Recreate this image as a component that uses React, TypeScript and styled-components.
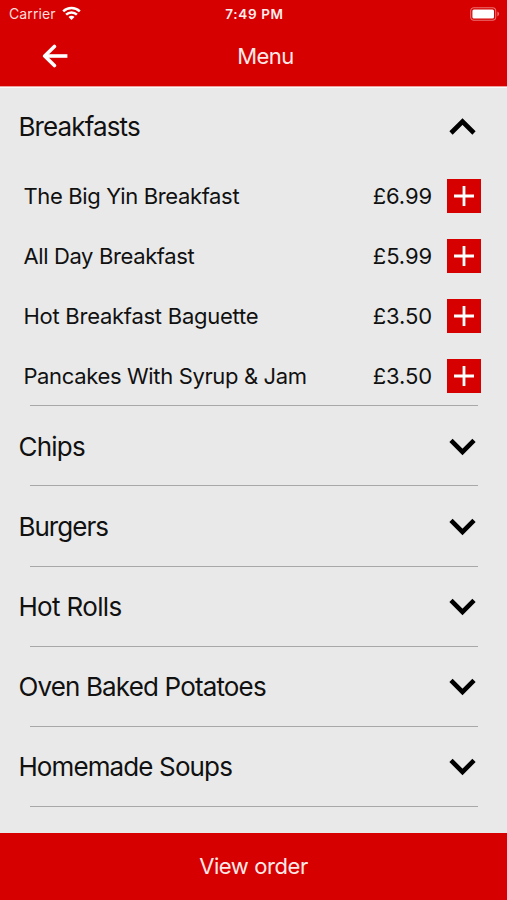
import React, { useState } from "react";
import styled, { createGlobalStyle } from "styled-components";

const RED = "#d60000";

const GlobalStyle = createGlobalStyle`
  * { box-sizing: border-box; }
  html, body { margin: 0; padding: 0; }
  body { background: #e9e9e9; font-family: Inter, "Liberation Sans", sans-serif; color: #111; }
  button { font: inherit; color: inherit; border: 0; padding: 0; margin: 0; background: none; cursor: pointer; }
  svg { display: block; }
`;

const Screen = styled.div`
  width: 507px;
  height: 900px;
  display: flex;
  flex-direction: column;
  overflow: hidden;
  background: #e9e9e9;
`;

const TopBar = styled.header`
  height: 87px;
  flex: none;
  background: ${RED};
  color: #fff;
  border-bottom: 1px solid #ee9c9c;
  box-shadow: 0 1px 0 #fafafa;
`;

const StatusBar = styled.div`
  height: 27px;
  display: grid;
  grid-template-columns: 1fr auto 1fr;
  align-items: center;
  padding: 0 7px 0 9px;
`;

const Carrier = styled.div`
  display: flex;
  align-items: center;
  gap: 6px;
  font-size: 14px;
  letter-spacing: 0.1px;
  color: #ffdede;
`;

const Clock = styled.div`
  font-size: 13.5px;
  font-weight: 600;
  letter-spacing: 0.65px;
  color: #ffeded;
`;

const BatterySlot = styled.div`
  justify-self: end;
`;

const NavBar = styled.nav`
  height: 58px;
  display: grid;
  grid-template-columns: 110px 1fr 110px;
  align-items: center;
`;

const BackButton = styled.button`
  justify-self: start;
  margin-left: 42px;
`;

const Title = styled.h1`
  margin: 0;
  padding-left: 24px;
  text-align: center;
  font-size: 22px;
  font-weight: 400;
  letter-spacing: -0.5px;
  color: #ffe9e9;
`;

const MenuList = styled.main`
  flex: 1;
  min-height: 0;
  overflow: hidden;
  margin-top: -1px;
`;

const Section = styled.section`
  display: flex;
  flex-direction: column;
`;

const SectionHeader = styled.button<{ $open: boolean }>`
  display: flex;
  align-items: center;
  justify-content: space-between;
  width: 100%;
  height: 80px;
  padding: ${(p) => (p.$open ? "1px" : "2.4px")} 31px 0 18.4px;
  text-align: left;
`;

const SectionName = styled.span<{ $spacing: number }>`
  font-size: 26px;
  line-height: 32px;
  letter-spacing: ${(p) => p.$spacing}px;
  white-space: nowrap;
`;

const Items = styled.ul`
  list-style: none;
  margin: 0;
  padding: 0;
`;

const Item = styled.li`
  display: flex;
  align-items: center;
  height: 59.8px;
  padding: 0.8px 26px 0 23.4px;
`;

const ItemName = styled.span<{ $spacing: number }>`
  flex: 1;
  font-size: 22px;
  letter-spacing: ${(p) => p.$spacing}px;
  white-space: nowrap;
`;

const Price = styled.span`
  font-size: 22px;
  letter-spacing: -0.1px;
  margin-right: 15px;
`;

const AddButton = styled.button`
  width: 34px;
  height: 34px;
  display: grid;
  place-items: center;
  background: ${RED};
`;

const Divider = styled.hr`
  width: 448px;
  height: 1px;
  margin: 0 0 -0.83px 30px;
  border: 0;
  background: #a8a8a8;
`;

const OrderButton = styled.button`
  && {
    flex: none;
    height: 67px;
    padding-bottom: 1px;
    background: ${RED};
    color: #ffe9e9;
    font-size: 22px;
    letter-spacing: -0.42px;
  }
`;

const WifiIcon = () => (
  <svg width="19" height="15" viewBox="0 0 19 15" fill="none" stroke="#fff" strokeWidth="2.5">
    <path d="M1.2 5.3a11.8 11.8 0 0 1 16.6 0" />
    <path d="M4.1 8.7a7.6 7.6 0 0 1 10.8 0" />
    <path d="M9.5 14l-3-3.1a4.2 4.2 0 0 1 6 0z" fill="#fff" stroke="none" />
  </svg>
);

const BatteryIcon = () => (
  <svg width="30" height="14" viewBox="0 0 30 14">
    <rect x="0.7" y="0.7" width="25" height="12.6" rx="3.2" fill="none" stroke="#ec7070" strokeWidth="1.1" />
    <rect x="2.4" y="2.4" width="21.6" height="9.2" rx="1.5" fill="#fff" />
    <path d="M27.4 4.6c2.3 1 2.3 3.8 0 4.8z" fill="#ec7070" />
  </svg>
);

const BackIcon = () => (
  <svg width="26" height="24" viewBox="0 0 26 24" fill="none" stroke="#fff" strokeWidth="3.6" strokeLinecap="round" strokeLinejoin="round">
    <path d="M12.4 2.5L2.7 12l9.7 9.5" />
    <path d="M3 12h22.4" strokeLinecap="butt" />
  </svg>
);

const Chevron = ({ open }: { open: boolean }) => (
  <svg width="27" height="18" viewBox="0 0 27 18" fill="none" stroke="#000" strokeWidth="4.6">
    <path d={open ? "M2 15L13.5 3.5L25 15" : "M2 2.4L13.5 13.9L25 2.4"} />
  </svg>
);

const PlusIcon = () => (
  <svg width="20" height="20" viewBox="0 0 20 20" stroke="#fff" strokeWidth="2.8">
    <path d="M10 0v20M0 10h20" />
  </svg>
);

type Dish = { name: string; price: string; spacing: number };
type Group = { name: string; spacing: number; dishes: Dish[] };

const groups: Group[] = [
  {
    name: "Breakfasts",
    spacing: -0.88,
    dishes: [
      { name: "The Big Yin Breakfast", price: "£6.99", spacing: -0.35 },
      { name: "All Day Breakfast", price: "£5.99", spacing: -0.37 },
      { name: "Hot Breakfast Baguette", price: "£3.50", spacing: -0.25 },
      { name: "Pancakes With Syrup & Jam", price: "£3.50", spacing: -0.35 },
    ],
  },
  { name: "Chips", spacing: -0.75, dishes: [] },
  { name: "Burgers", spacing: -0.97, dishes: [] },
  { name: "Hot Rolls", spacing: -0.65, dishes: [] },
  { name: "Oven Baked Potatoes", spacing: -0.85, dishes: [] },
  { name: "Homemade Soups", spacing: -0.88, dishes: [] },
];

export default function App() {
  const [openGroup, setOpenGroup] = useState("Breakfasts");

  return (
    <>
      <GlobalStyle />
      <Screen>
        <TopBar>
          <StatusBar>
            <Carrier>
              Carrier
              <WifiIcon />
            </Carrier>
            <Clock>7:49 PM</Clock>
            <BatterySlot>
              <BatteryIcon />
            </BatterySlot>
          </StatusBar>
          <NavBar>
            <BackButton aria-label="Back">
              <BackIcon />
            </BackButton>
            <Title>Menu</Title>
          </NavBar>
        </TopBar>
        <MenuList>
          {groups.map((group) => {
            const open = group.name === openGroup;
            return (
              <Section key={group.name}>
                <SectionHeader
                  $open={open}
                  aria-expanded={open}
                  onClick={() => setOpenGroup(open ? "" : group.name)}
                >
                  <SectionName $spacing={group.spacing}>{group.name}</SectionName>
                  <Chevron open={open} />
                </SectionHeader>
                {open && (
                  <Items>
                    {group.dishes.map((dish) => (
                      <Item key={dish.name}>
                        <ItemName $spacing={dish.spacing}>{dish.name}</ItemName>
                        <Price>{dish.price}</Price>
                        <AddButton aria-label={`Add ${dish.name}`}>
                          <PlusIcon />
                        </AddButton>
                      </Item>
                    ))}
                  </Items>
                )}
                <Divider />
              </Section>
            );
          })}
        </MenuList>
        <OrderButton>View order</OrderButton>
      </Screen>
    </>
  );
}
